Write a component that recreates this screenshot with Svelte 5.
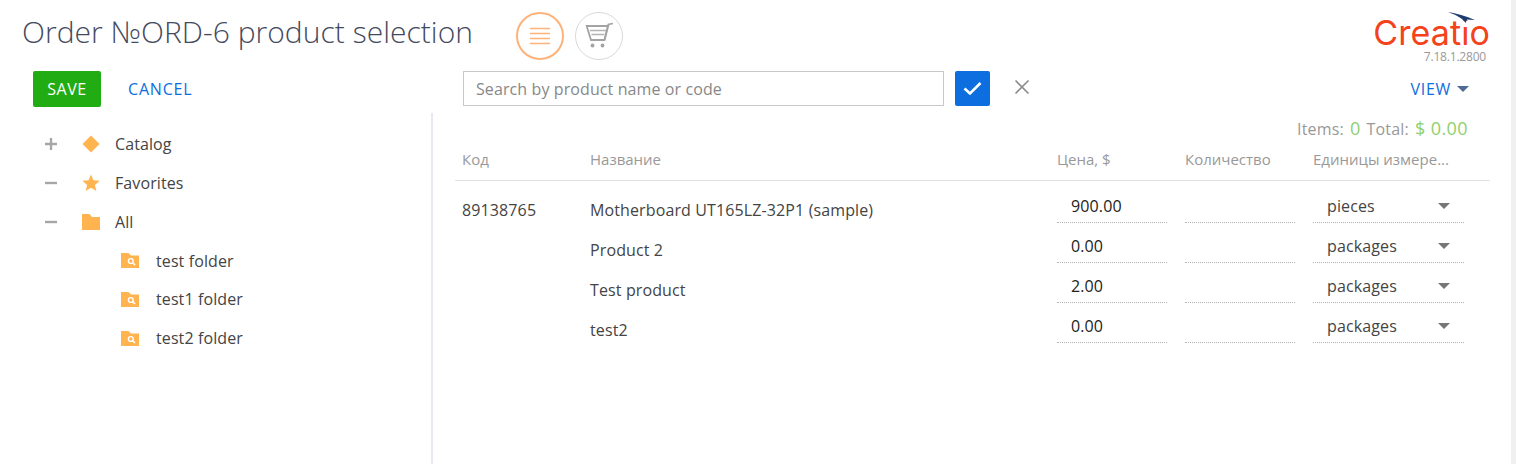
<script lang="ts">
  const tree = [
    { label: "Catalog", sign: "plus", icon: "diamond" },
    { label: "Favorites", sign: "minus", icon: "star" },
    { label: "All", sign: "minus", icon: "folder" }
  ];
  const folders = ["test folder", "test1 folder", "test2 folder"];
  const rows = [
    { code: "89138765", name: "Motherboard UT165LZ-32P1 (sample)", price: "900.00", unit: "pieces" },
    { code: "", name: "Product 2", price: "0.00", unit: "packages" },
    { code: "", name: "Test product", price: "2.00", unit: "packages" },
    { code: "", name: "test2", price: "0.00", unit: "packages" }
  ];
</script>

<div class="page">
  <main class="content">
    <header class="top">
      <h1>Order №ORD-6 product selection</h1>
      <div class="modes">
        <button class="mode active" type="button" aria-label="List">
          <svg width="24" height="18" viewBox="0 0 24 18">
            <path d="M2 1.500h20M2 6.500h20M2 11.500h20M2 16.500h20" stroke="#fdb27a" stroke-width="1.300" fill="none" />
          </svg>
        </button>
        <button class="mode" type="button" aria-label="Cart">
          <svg width="30" height="30" viewBox="0 0 30 30" fill="none">
            <path d="M2.700 5H24.200L20.500 19H7Z" stroke="#a3a3a3" stroke-width="1.800" />
            <path d="M6 9.500H22M7.500 13.500H20.500" stroke="#b5b5b5" stroke-width="1.500" />
            <path d="M20.500 19L24.200 3.500L29 2.500" stroke="#a3a3a3" stroke-width="1.600" />
            <circle cx="8.500" cy="24.500" r="1.900" fill="#a3a3a3" />
            <circle cx="18.500" cy="24.500" r="1.900" fill="#a3a3a3" />
          </svg>
        </button>
      </div>
      <div class="brand">
        <div class="logo">
          Creatio
          <svg class="swoosh" width="27" height="15" viewBox="0 0 27 15">
            <path d="M13 9H27V15H13Z" fill="#fff" />
            <path d="M0 0C8 1.500 18 4 27 8L19 7.500L17.500 11C15 6.500 8 3 0 0Z" fill="#1d3d72" />
          </svg>
        </div>
        <div class="version">7.18.1.2800</div>
      </div>
    </header>

    <div class="toolbar">
      <div class="actions">
        <button class="save" type="button">SAVE</button>
        <button class="cancel" type="button">CANCEL</button>
      </div>
      <div class="search">
        <input type="text" placeholder="Search by product name or code" />
        <button class="apply" type="button" aria-label="Apply">
          <svg width="21" height="17" viewBox="0 0 21 17">
            <path d="M2.500 8.500L8 13.500L18.500 3" stroke="#fff" stroke-width="2.600" fill="none" />
          </svg>
        </button>
        <button class="clear" type="button" aria-label="Clear">
          <svg width="16" height="16" viewBox="0 0 16 16">
            <path d="M1.500 1.500L14.500 14.500M14.500 1.500L1.500 14.500" stroke="#8c8c8c" stroke-width="1.700" fill="none" />
          </svg>
        </button>
      </div>
      <button class="view" type="button">VIEW<span class="view-caret"></span></button>
    </div>

    <div class="body">
      <aside class="tree">
        {#each tree as item}
          <div class="node">
            <span class="sign">
              <svg width="14" height="14" viewBox="0 0 14 14">
                <path d={item.sign === "plus" ? "M1 7h12M7 1v12" : "M1 7h12"} stroke="#a6a6a6" stroke-width="2.400" fill="none" />
              </svg>
            </span>
            <span class="node-icon">
              {#if item.icon === "diamond"}
                <svg width="18" height="18" viewBox="0 0 18 18"><path d="M9 .5L17.500 9L9 17.500L.5 9Z" fill="#ffb450" /></svg>
              {:else if item.icon === "star"}
                <svg width="18" height="18" viewBox="0 0 18 18"><path d="M9 .5L11.400 6.300L17.700 6.800L12.900 10.900L14.400 17L9 13.800L3.600 17L5.100 10.900L.3 6.800L6.600 6.300Z" fill="#ffb450" /></svg>
              {:else}
                <svg width="18" height="16" viewBox="0 0 18 16"><path d="M0 0H7.500L10 3H18V16H0Z" fill="#ffb450" /></svg>
              {/if}
            </span>
            <span>{item.label}</span>
          </div>
        {/each}
        {#each folders as folder}
          <div class="node sub">
            <svg width="18" height="15" viewBox="0 0 18 15">
              <path d="M0 0H7.500L10 2.500H18V15H0Z" fill="#ffb450" />
              <circle cx="9.800" cy="8" r="2.400" fill="none" stroke="#fff" stroke-width="1.400" />
              <path d="M11.500 9.700L14 12" stroke="#fff" stroke-width="1.600" />
            </svg>
            <span>{folder}</span>
          </div>
        {/each}
      </aside>

      <section class="results">
        <div class="summary">
          <span>Items:</span><b>0</b><span>Total:</span><b class="sum">$ 0.00</b>
        </div>
        <div class="grid head">
          <div>Код</div>
          <div>Название</div>
          <div>Цена, $</div>
          <div>Количество</div>
          <div class="nowrap">Единицы измере...</div>
        </div>
        <div class="rows">
          {#each rows as row}
            <div class="grid row">
              <div class="code">{row.code}</div>
              <div class="name">{row.name}</div>
              <div class="field price">{row.price}</div>
              <div class="field"></div>
              <div class="field unit">{row.unit}<span class="caret"></span></div>
            </div>
          {/each}
        </div>
      </section>
    </div>
  </main>
  <div class="scroll-strip"></div>
</div>

<style>
  :global(body) {
    margin: 0;
    background: #fff;
    font-family: "Open Sans", "Noto Sans", sans-serif;
    color: #444;
  }
  .page {
    display: flex;
    height: 464px;
    overflow: hidden;
  }
  .content {
    flex: 1;
    min-width: 0;
  }
  .scroll-strip {
    width: 5px;
    background: #f0f0f0;
  }
  button {
    font-family: inherit;
    border: none;
    background: none;
    padding: 0;
    cursor: pointer;
  }

  .top {
    display: flex;
    height: 65px;
    padding-left: 22px;
    padding-right: 22px;
  }
  h1 {
    margin: 0;
    width: 494px;
    padding-top: 11px;
    font-size: 30px;
    font-weight: 300;
    line-height: 41px;
    letter-spacing: 0.03px;
    color: #444a5e;
    white-space: nowrap;
  }
  .modes {
    display: flex;
    gap: 11px;
    padding-top: 12px;
  }
  .mode {
    display: flex;
    align-items: center;
    justify-content: center;
    box-sizing: border-box;
    width: 48px;
    height: 48px;
    border: 1px solid #d9d9d9;
    border-radius: 50%;
  }
  .mode.active {
    border: 2px solid #fdb27a;
  }
  .brand {
    margin-left: auto;
    padding-top: 16px;
    text-align: right;
  }
  .logo {
    position: relative;
    font-family: "Inter", sans-serif;
    font-size: 34px;
    letter-spacing: 0.1px;
    line-height: 33px;
    color: #f4421a;
    margin-right: -1px;
  }
  .swoosh {
    position: absolute;
    top: -4px;
    right: 15px;
  }
  .version {
    margin-top: 1px;
    font-size: 12px;
    line-height: 14px;
    letter-spacing: -0.2px;
    color: #999;
    padding-right: 3px;
  }

  .toolbar {
    display: flex;
    align-items: flex-start;
    height: 36px;
    margin-top: 6px;
    padding-left: 33px;
  }
  .actions {
    display: flex;
    align-items: center;
    width: 430px;
  }
  .save {
    width: 68px;
    height: 36px;
    background: #22ac14;
    border-radius: 2px;
    color: #fff;
    font-size: 16px;
    letter-spacing: 0.5px;
  }
  .cancel {
    margin-left: 27px;
    color: #0d6ee0;
    font-size: 16px;
    letter-spacing: 0.8px;
  }
  .search {
    display: flex;
    align-items: flex-start;
  }
  input {
    box-sizing: border-box;
    width: 481px;
    height: 35px;
    border: 1px solid #c9c9c9;
    padding: 0 12px;
    font-family: inherit;
    font-size: 16px;
    letter-spacing: 0.1px;
    outline: none;
  }
  input::placeholder {
    color: #888;
    opacity: 1;
  }
  .apply {
    display: flex;
    align-items: center;
    justify-content: center;
    width: 35px;
    height: 35px;
    margin-left: 11px;
    background: #0d6ee0;
    border-radius: 2px;
  }
  .clear {
    display: flex;
    margin-left: 24px;
    margin-top: 8px;
  }
  .view {
    display: flex;
    align-items: center;
    height: 36px;
    margin-left: auto;
    margin-right: 42px;
    color: #0d6ee0;
    font-size: 16px;
    letter-spacing: 0.7px;
  }
  .view-caret {
    width: 0;
    height: 0;
    margin-left: 6px;
    border-left: 6px solid transparent;
    border-right: 6px solid transparent;
    border-top: 6px solid #4f6a96;
  }

  .body {
    display: flex;
    height: 351px;
    margin-top: 6px;
  }
  .tree {
    box-sizing: border-box;
    width: 433px;
    padding-top: 12px;
    border-right: 2px solid #e6e9f2;
  }
  .node {
    display: flex;
    align-items: center;
    height: 38.750px;
    padding-left: 44px;
    font-size: 16px;
    letter-spacing: 0.1px;
    color: #444;
  }
  .sign {
    display: flex;
    width: 38px;
  }
  .node-icon {
    display: flex;
    width: 33px;
  }
  .sub {
    padding-left: 121px;
    gap: 17px;
  }

  .results {
    flex: 1;
    min-width: 0;
    padding-left: 22px;
    padding-right: 21px;
  }
  .summary {
    display: flex;
    justify-content: flex-end;
    align-items: baseline;
    gap: 6px;
    height: 30px;
    padding-right: 22px;
    font-size: 16px;
    letter-spacing: 0.2px;
    line-height: 30px;
    color: #999;
  }
  .summary b {
    font-size: 18px;
    font-weight: 400;
    color: #8fd06e;
  }
  .summary .sum {
    letter-spacing: 0.4px;
  }
  .grid {
    display: grid;
    column-gap: 18px;
    grid-template-columns: 110px 449px 110px 110px 151px;
    padding-left: 7px;
  }
  .head {
    height: 38px;
    padding-bottom: 5px;
    box-sizing: border-box;
    align-items: center;
    border-bottom: 1px solid #e2e2e2;
    font-size: 15px;
    color: #999;
  }
  .nowrap {
    white-space: nowrap;
  }
  .rows {
    padding-top: 2px;
  }
  .row {
    height: 40px;
    font-size: 16px;
    letter-spacing: 0.12px;
    color: #444;
  }
  .code,
  .name {
    line-height: 54px;
    height: 40px;
  }
  .field {
    box-sizing: border-box;
    height: 40px;
    padding-left: 14px;
    padding-top: 11px;
    line-height: 24px;
    border-bottom: 1px dotted #b5b5b5;
  }
  .price {
    color: #222;
  }
  .unit {
    position: relative;
  }
  .caret {
    position: absolute;
    top: 20px;
    right: 14px;
    width: 0;
    height: 0;
    border-left: 6px solid transparent;
    border-right: 6px solid transparent;
    border-top: 6px solid #777;
  }
</style>
